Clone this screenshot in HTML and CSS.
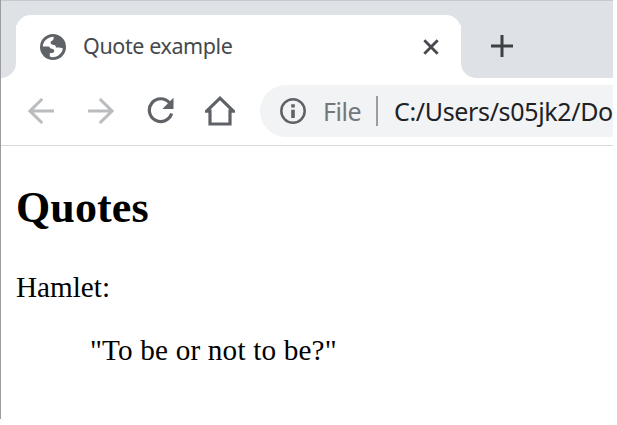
FILE: index.html
```
<!DOCTYPE html>
<html lang="en">
<head>
<meta charset="utf-8">
<title>Quote example</title>
<link rel="stylesheet" href="styles.css">
</head>
<body>
<div class="window">
  <header class="tabstrip">
    <div class="edge"></div>
    <div class="tab">
      <svg class="globe" viewBox="0 0 26 26"><circle cx="13" cy="13" r="13" fill="#5f6368"/><path d="M2.8 12.6 C3 7.5 7 3.2 13.6 2.8 V4.6 Q13.6 6.6 11.6 7 Q10.3 7.4 10.6 9 Q11 10.6 12.8 10.8 Q16 11 16 13.6 H19 Q20.6 13.6 22.9 14.6 C22 19.5 18 23.3 12.2 23.2 L9.8 22.6 V19 H12 Q14.4 19 14.2 16.6 Q14 14.8 11.8 14.8 Q10 14.8 9 12.6Z" fill="#fff"/></svg>
      <span class="title">Quote example</span>
      <svg class="close" viewBox="0 0 16 16"><path d="M1.3 1.3 L14.7 14.7 M14.7 1.3 L1.3 14.7" fill="none" stroke="#46494d" stroke-width="2.8"/></svg>
    </div>
    <div class="rest">
      <svg class="plus" viewBox="0 0 22 22"><path d="M11 0V22M0 11H22" stroke="#3c4043" stroke-width="3"/></svg>
    </div>
  </header>
  <nav class="toolbar">
    <svg class="arrow" viewBox="0 0 26 26"><path d="M26 13H2M14.2 1L2 13L14.2 25" fill="none" stroke="#babcbe" stroke-width="3"/></svg>
    <svg class="arrow forward" viewBox="0 0 26 26"><path d="M0 13H24M11.8 1L24 13L11.8 25" fill="none" stroke="#babcbe" stroke-width="3"/></svg>
    <svg class="reload" viewBox="0 0 27 27"><path d="M22.6 6 A11.4 11.4 0 1 0 24.6 16.6" fill="none" stroke="#5f6368" stroke-width="3.2"/><path d="M26.5 .8V12H15.3Z" fill="#5f6368"/></svg>
    <svg class="home" viewBox="0 0 30 30"><path d="M1.6 15.2L15 2.2L28.4 15.2H25V28H5V15.2Z" fill="none" stroke="#5f6368" stroke-width="3.2"/></svg>
    <div class="address">
      <svg class="info" viewBox="0 0 26 26"><circle cx="13" cy="13" r="11.7" fill="none" stroke="#5f6368" stroke-width="2.5"/><path d="M11.2 6.2H14.8V9.6H11.2ZM11.2 11.8H14.8V20H11.2Z" fill="#5f6368"/></svg>
      <span class="scheme">File</span>
      <span class="divider"></span>
      <span class="path">C:/Users/s05jk2/Do</span>
    </div>
  </nav>
  <main class="page">
    <h2>Quotes</h2>
    <p>Hamlet:</p>
    <blockquote>"To be or not to be?"</blockquote>
  </main>
</div>
</body>
</html>
```
FILE: styles.css
```
* { box-sizing: border-box; }
body { margin: 0; background: #fff; overflow: hidden; }
svg { display: block; flex: none; }
.window {
  width: 613px;
  height: 419px;
  border-left: 1px solid #9d9d9f;
  overflow: hidden;
  font-family: "Noto Sans", "Open Sans", sans-serif;
}
.tabstrip {
  display: flex;
  height: 78px;
  border-top: 1px solid #c6c9ce;
  background: linear-gradient(#dee1e6 0 24px, #fff 24px);
}
.edge { width: 15px; background: #dee1e6; border-bottom-right-radius: 15px; }
.tab {
  display: flex;
  align-items: center;
  width: 445px;
  height: 63px;
  margin-top: 14px;
  padding-left: 24px;
  background: #fff;
  border-radius: 15px 15px 0 0;
}
.globe { width: 26px; height: 26px; }
.title {
  width: 357px;
  padding-left: 17px;
  font-size: 21.5px;
  line-height: 28px;
  margin-top: -2px;
  letter-spacing: -0.4px;
  color: #45494d;
  white-space: nowrap;
}
.close { width: 16px; height: 16px; }
.rest { flex: 1; padding: 34px 0 0 30px; background: #dee1e6; border-bottom-left-radius: 15px; }
.plus { width: 22px; height: 22px; }
.toolbar {
  display: flex;
  align-items: center;
  height: 68px;
  padding: 0 0 2px 27px;
  border-bottom: 1px solid #d8d9db;
}
.arrow { width: 26px; height: 26px; }
.forward { margin-left: 34px; }
.reload { width: 27px; height: 27px; margin-left: 33px; }
.home { width: 30px; height: 30px; margin-left: 31px; }
.address {
  display: flex;
  align-items: center;
  flex: 1;
  height: 52px;
  margin-left: 25px;
  padding-left: 20px;
  background: #f1f3f4;
  border-radius: 26px 0 0 26px;
  overflow: hidden;
  white-space: nowrap;
  font-size: 25px;
  line-height: 36px;
}
.info { width: 26px; height: 26px; }
.scheme { width: 70px; padding-left: 17px; color: #73777b; letter-spacing: -0.5px; }
.divider { flex: none; width: 2px; height: 30px; background: #9b9ea1; }
.path { margin-left: 16px; color: #202124; letter-spacing: -0.35px; }
.page { padding: 36px 15px 0; font-family: "Liberation Serif", "Times New Roman", serif; color: #000; }
h2 { margin: 0; font-size: 44px; line-height: 52px; letter-spacing: 0.1px; }
p { margin: 36px 0 0; font-size: 29.2px; line-height: 34px; }
blockquote { margin: 29px 0 0 74px; font-size: 29.2px; line-height: 34px; letter-spacing: 0.18px; }
```
